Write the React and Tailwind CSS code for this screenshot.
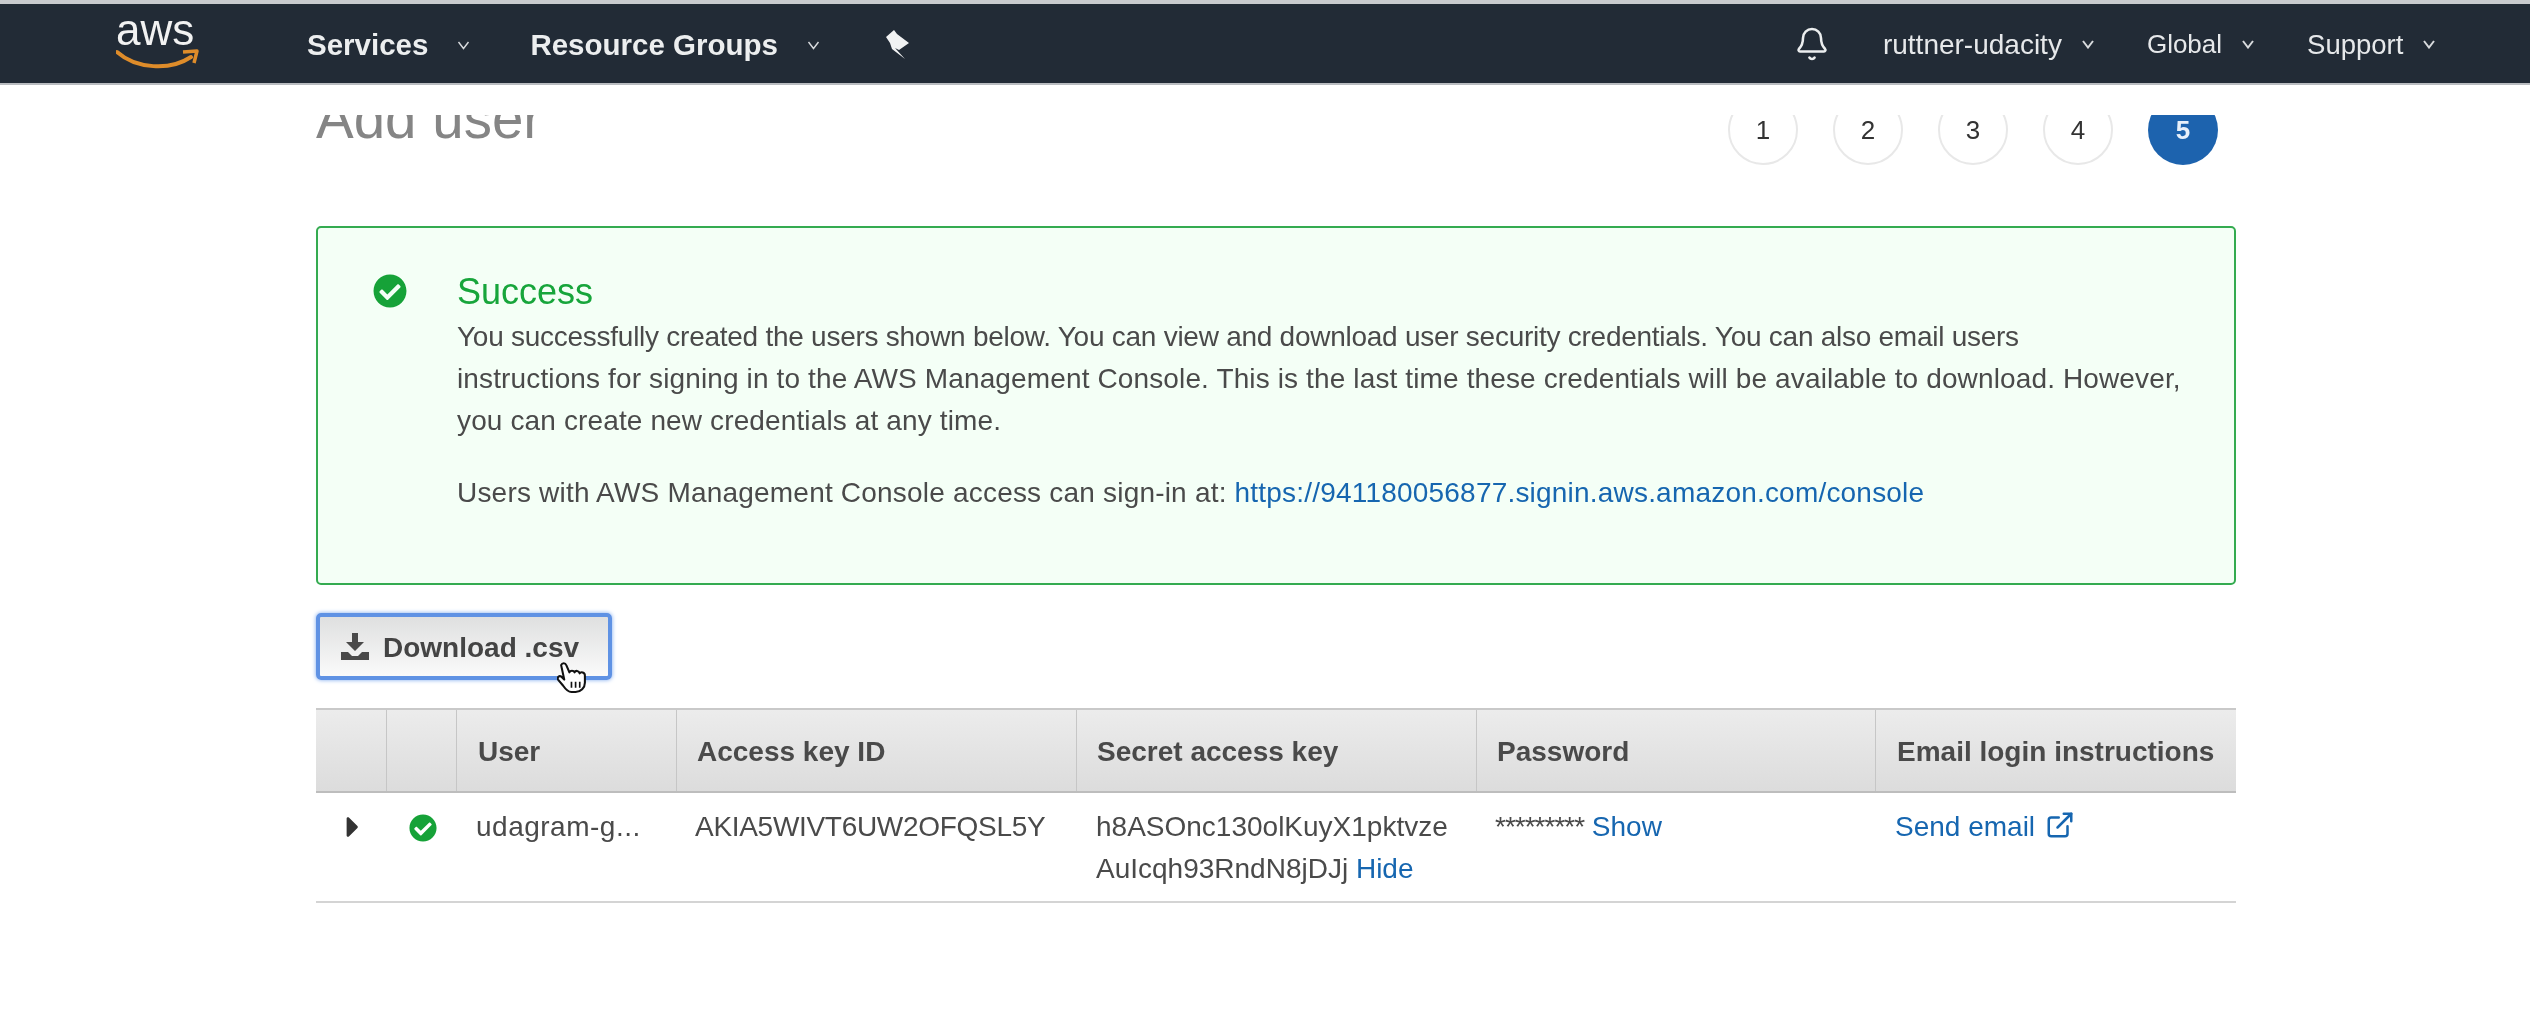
import { FaCaretRight, FaCheckCircle } from 'react-icons/fa';
import { Bell, ExternalLink } from 'lucide-react';

const steps = ['1', '2', '3', '4', '5'];

function AwsLogo() {
  return (
    <div className="relative w-[84px] h-[66px]">
      <span className="absolute left-0 top-0 text-[44px] leading-[52px] text-[#f2f2f2]">aws</span>
      <svg className="absolute left-0 top-[45px]" width="84" height="20" viewBox="0 0 84 20" fill="none">
        <path d="M1 3C20 20 54 22 75 8" stroke="#de8c2a" strokeWidth="4" strokeLinecap="round" />
        <path d="M67 3L81 2L78 14" stroke="#de8c2a" strokeWidth="3.5" strokeLinejoin="round" />
      </svg>
    </div>
  );
}

function Caret({ wide = false }) {
  return (
    <svg width={wide ? 15 : 12} height="9" viewBox="0 0 12 9" fill="none" className="shrink-0">
      <path d="M1 1L6 7.5L11 1" stroke="#d8dadd" strokeWidth={wide ? 1.4 : 2} />
    </svg>
  );
}

function NavMenu({ label, className }) {
  return (
    <div className={`flex items-center gap-[20px] text-[#e6e8ea] ${className}`}>
      <span>{label}</span>
      <Caret />
    </div>
  );
}

function DownloadIcon() {
  return (
    <svg width="30" height="30" viewBox="0 0 30 30" fill="#4a4a4a" className="shrink-0">
      <path d="M12 1H18V10H24L15 19L6 10H12Z" />
      <path d="M1 20H8L12 24H18L22 20H29V28H1Z" />
    </svg>
  );
}

function HandCursor({ className }) {
  return (
    <svg className={className} width="31" height="31" viewBox="0 0 30 30" fill="#ffffff" stroke="#111111" strokeWidth="2" strokeLinejoin="round">
      <path d="M4 3C5 0.500 8 0.500 9 3L12 10C13 8 16 8 17 10C18 8 21 8 22 11C23 9 27 10 27 13V20C27 25 23 29 18 29H14C10 29 8 26 6 23L1 17C0 15 2 13 4 14L7 17Z" />
      <path d="M14 19V25M18 19V25M22 19V25" fill="none" strokeWidth="1.6" />
    </svg>
  );
}

function Divider({ children, className = '' }) {
  return <div className={`border-r border-[#c6c6c6] flex items-center pt-[3px] ${className}`}>{children}</div>;
}

export default function App() {
  return (
    <div className="w-[2530px] h-[1010px] bg-white overflow-hidden blur-[0.5px] font-['Liberation_Sans',Arial,sans-serif]">
      <header className="h-[85px] bg-[#222b36] border-t-[4px] border-b-[2px] border-t-[#c9cbce] border-b-[#b9bcc0] flex items-center">
        <div className="ml-[116px] self-start"><AwsLogo /></div>
        <div className="ml-[107px] pt-[3px] flex items-center gap-[28px] text-[29.500px] font-bold text-[#eceeef]">
          <span>Services</span>
          <Caret wide />
        </div>
        <div className="ml-[59px] pt-[3px] flex items-center gap-[28px] text-[29.500px] font-bold text-[#eceeef]">
          <span>Resource Groups</span>
          <Caret wide />
        </div>
        <svg className="ml-[63px]" width="26" height="30" viewBox="0 0 26 30" fill="#f1f2f3">
          <path d="M2 8L10 1L13 5L25 14L15 21L11 19L21 30L8 20L6 14Z" />
        </svg>
        <Bell size={36} strokeWidth={1.7} className="ml-[884px] text-[#eceeef]" />
        <NavMenu label="ruttner-udacity" className="ml-[53px] pt-[2px] text-[28px]" />
        <NavMenu label="Global" className="ml-[53px] pt-[2px] text-[26px]" />
        <NavMenu label="Support" className="ml-[53px] pt-[2px] text-[27.500px]" />
      </header>

      <main className="ml-[316px] w-[1920px] pt-[30px]">
        <div className="h-[111px]">
          <div className="h-[50px] overflow-hidden flex justify-between pr-[18px]">
            <h1 className="text-[56.500px] leading-[60px] mt-[-26px] text-[#858585]">Add user</h1>
            <div className="flex gap-[35px] mt-[-20px]">
              {steps.map((step) => (
                <div
                  key={step}
                  className={`w-[70px] h-[70px] rounded-full flex items-center justify-center text-[26px] ${
                    step === '5'
                      ? 'bg-[#1d63ae] text-[#e8f0fa] font-bold'
                      : 'bg-white border-2 border-[#e8e8e8] text-[#333333]'
                  }`}
                >
                  {step}
                </div>
              ))}
            </div>
          </div>
        </div>

        <section className="h-[359px] bg-[#f4fff6] border-2 border-[#34ab50] rounded-[5px] flex pl-[55px] pt-[41px]">
          <FaCheckCircle size={34} className="text-[#16a238] mt-[5px] shrink-0" />
          <div className="ml-[50px] text-[28px] leading-[42px] text-[#4a4a4a] whitespace-nowrap">
            <h2 className="text-[36px] leading-[46px] mb-[1px] text-[#17a53b]">Success</h2>
            <p className="tracking-[-0.260px]">
              You successfully created the users shown below. You can view and download user security credentials. You can also email users
            </p>
            <p className="tracking-[0.130px]">
              instructions for signing in to the AWS Management Console. This is the last time these credentials will be available to download. However,
            </p>
            <p className="tracking-[0.130px]">you can create new credentials at any time.</p>
            <p className="mt-[30px] tracking-[0.200px]">
              Users with AWS Management Console access can sign-in at:{' '}
              <span className="text-[#1666b0]">https://941180056877.signin.aws.amazon.com/console</span>
            </p>
          </div>
        </section>

        <div className="relative mt-[28px] w-[296px] h-[67px]">
          <button className="w-full h-full rounded-[5px] border-[4px] border-[#5f92e4] shadow-[0_0_4px_#7aa7ee] bg-gradient-to-b from-[#dfe0e0] to-[#fafafa] flex items-center pl-[20px] gap-[13px] text-[28px] font-bold text-[#444444]">
            <DownloadIcon />
            <span className="pt-[3px]">Download .csv</span>
          </button>
          <HandCursor className="absolute left-[241px] top-[49px]" />
        </div>

        <div className="mt-[28px]">
          <div className="h-[85px] grid grid-cols-[71px_70px_220px_400px_400px_399px_360px] border-t-2 border-b-2 border-t-[#c9c9c9] border-b-[#bdbdbd] bg-gradient-to-b from-[#ececec] to-[#dcdcdc] text-[28px] font-bold text-[#4a4a4a]">
            <Divider />
            <Divider />
            <Divider className="pl-[21px]">User</Divider>
            <Divider className="pl-[20px]">Access key ID</Divider>
            <Divider className="pl-[20px]">Secret access key</Divider>
            <Divider className="pl-[20px]">Password</Divider>
            <div className="flex items-center pl-[21px] pt-[3px] whitespace-nowrap">Email login instructions</div>
          </div>
          <div className="h-[110px] grid grid-cols-[71px_70px_220px_400px_400px_399px_360px] border-b-2 border-[#d4d4d4] pt-[13px] text-[28px] leading-[42px] text-[#4a4a4a]">
            <div className="pl-[20px] pt-[4px]"><FaCaretRight size={34} className="text-[#333333]" /></div>
            <div className="pl-[22px] pt-[8px]"><FaCheckCircle size={28} className="text-[#16a238]" /></div>
            <div className="pl-[19px] tracking-[0.500px]">udagram-g...</div>
            <div className="pl-[18px] tracking-[-0.300px]">AKIA5WIVT6UW2OFQSL5Y</div>
            <div className="pl-[19px]">
              <div>h8ASOnc130olKuyX1pktvze</div>
              <div>AuIcqh93RndN8jDJj <span className="text-[#1666b0]">Hide</span></div>
            </div>
            <div className="pl-[18px]">
              <span className="tracking-[-1px]">*********</span> <span className="text-[#1666b0]">Show</span>
            </div>
            <div className="pl-[19px] flex items-start gap-[10px] text-[#1666b0]">
              <span>Send email</span>
              <ExternalLink size={30} strokeWidth={2} className="mt-[4px]" />
            </div>
          </div>
        </div>
      </main>
    </div>
  );
}
